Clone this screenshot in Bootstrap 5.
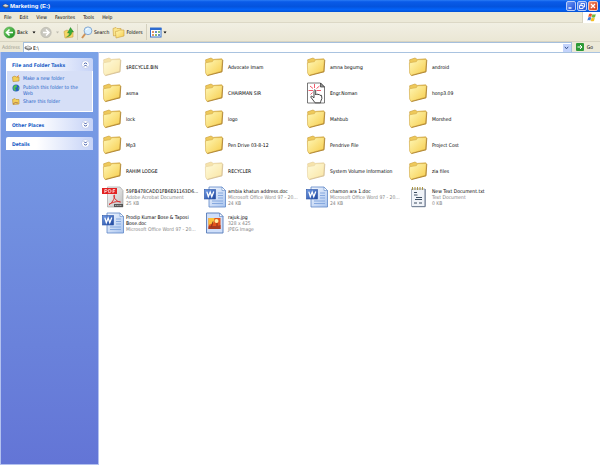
<!DOCTYPE html>
<html lang="en">
<head>
<meta charset="utf-8">
<meta name="viewport" content="width=device-width, initial-scale=1">
<title>Marketing (E:)</title>
<link href="https://cdn.jsdelivr.net/npm/bootstrap@5.3.0/dist/css/bootstrap.min.css" rel="stylesheet">
<style>
body { font-family: "DejaVu Sans Condensed", "Noto Sans", sans-serif; font-size: 5px; line-height: 6px; color: #000; background: #fff; }
button, input { font: inherit; color: inherit; }
svg { display: block; flex: none; }
.plain { border: 0; background: none; padding: 0; gap: 1px; display: flex; align-items: center; color: inherit; }
.titlebar { height: 12px; background: linear-gradient(#2a7cf5 0, #0a5be8 15%, #0453dd 55%, #0463f8 80%, #0350d2 100%); color: #fff; padding: 0 2px; gap: 1px; }
.titlebar h1 { font: bold 6px/12px "Liberation Sans", sans-serif; }
.winbtn { width: 10px; height: 10px; border: 1px solid #b9cdf8; border-radius: 2px; background: linear-gradient(135deg, #6d97f5, #1d4fd8); padding: 0; }
.winbtn.shut { background: linear-gradient(135deg, #f08a6a, #d63a12); border-color: #f4c9bd; }
.menus { height: 11px; background: #ece9d8; border-bottom: 1px solid #dcd8c6; padding-left: 4px; }
.menus nav { gap: 8px; }
.menus a { color: #000; text-decoration: none; }
.flagcell { width: 18px; height: 11px; background: #fff; border-left: 1px solid #d6d2c0; }
.tools { height: 19px; background: linear-gradient(#f1efe3, #ebe7d5); border-bottom: 1px solid #d8d4c2; padding-left: 3px; gap: 3px; }
.vsep { width: 1px; height: 16px; background: #d4d0be; }
.address { height: 10px; background: #ece9d8; padding-left: 2px; gap: 2px; }
.address label { color: #9a978a; width: 19px; }
.addrbox { height: 10px; background: #fff; border: 1px solid #a5bfdc; border-width: 1px 1px 0; }
.addrbox input { border: 0; outline: 0; padding: 0; height: 8px; min-width: 0; background: none; }
.addrbtn { width: 8px; height: 8px; background: #c3d3fb; justify-content: center; }
.gobtn { gap: 3px; padding: 0 7px 0 2px; }
.side { width: 99px; padding: 6px 5px; gap: 6px; background: linear-gradient(#7ba2e7, #6375d6); border: 1px solid #b3c1ef; border-top: 0; }
.panelhead { width: 100%; height: 13px; padding: 0 3px 0 6px; border-radius: 2px 2px 0 0; background: linear-gradient(90deg, #fff 35%, #c6d3f7); color: #215dc6; font-weight: bold; }
.panelbody { background: #d6dff7; border: 1px solid #fff; border-top: 0; padding: 4px 5px 6px; gap: 2px; }
.panelbody a { color: #215dc6; text-decoration: none; gap: 3px; }
.files { display: grid; grid-template-columns: repeat(auto-fill, 102px); grid-auto-rows: 26px; align-content: start; padding: 1px 0 0 3px; border-top: 1px solid #a9c3e0; }
.item { gap: 2px; }
.item a { color: #000; text-decoration: none; }
.item > div { width: 77px; }
.meta { color: #858585; white-space: nowrap; }
.faint { opacity: .5; }
</style>
<script src="https://cdn.jsdelivr.net/npm/bootstrap@5.3.0/dist/js/bootstrap.bundle.min.js"></script>
</head>
<body class="d-flex flex-column min-vh-100">
<svg width="0" height="0" class="position-absolute" aria-hidden="true">
<defs>
<linearGradient id="gf" x1="0" y1="0" x2="1" y2="1"><stop offset="0" stop-color="#fff8b8"/><stop offset="1" stop-color="#f6cc4a"/></linearGradient>
<linearGradient id="gd" x1="0" y1="0" x2="1" y2="1"><stop offset="0" stop-color="#f4f8ff"/><stop offset="1" stop-color="#a9c4ee"/></linearGradient>
<linearGradient id="gw" x1="0" y1="0" x2="1" y2="1"><stop offset="0" stop-color="#6f9be6"/><stop offset="1" stop-color="#1e459c"/></linearGradient>
<linearGradient id="gg" x1="0" y1="0" x2="1" y2="1"><stop offset="0" stop-color="#7fd470"/><stop offset="1" stop-color="#138a1c"/></linearGradient>
<linearGradient id="gp" x1="0" y1="0" x2="1" y2="1"><stop offset="0" stop-color="#fafafa"/><stop offset="1" stop-color="#bdbdbd"/></linearGradient>
<symbol id="folder" viewBox="0 0 22 22"><path d="M1.600 3.800 7 2l2.300 1.400L17.800 2.800v13L3 19z" fill="#eec95a" stroke="#c79a35" stroke-width=".6"/><path d="m1.400 6.800 7-1.200 1.200-1.900 8.800-.2-.8 11.700L3 19.400 1.600 17z" fill="url(#gf)" stroke="#d2a843" stroke-width=".6"/><path d="M3.500 19.600 18 15.800 18.800 4" fill="none" stroke="#a87c28" stroke-width=".8"/></symbol>
<symbol id="word" viewBox="0 0 22 22"><path d="M5 1h13l3.500 3.500V21H5z" fill="url(#gd)" stroke="#5d86c7" stroke-width=".8"/><path d="M18 1v3.500h3.500z" fill="#fff" stroke="#5d86c7" stroke-width=".6"/><path d="M14 7h5M14 9.500h5M14 12h5M8 15h11M8 17.500h11" stroke="#86a9df" stroke-width="1"/><rect x=".4" y="3.500" width="11.200" height="9.500" fill="url(#gw)" stroke="#3159a8" stroke-width=".6"/><path d="m2.800 5.600 1.500 5L6.200 6l1.600 4.600 2-5" fill="none" stroke="#fff" stroke-width="1.300"/></symbol>
<symbol id="pdf" viewBox="0 0 22 22"><path d="M5.500 1H18l3 3.500V21H5.500z" fill="url(#gp)" stroke="#999" stroke-width=".6"/><rect x="0" y="2" width="15" height="6" fill="#e22222"/><path d="M2.800 7V3.500h1.400q1 .1 1 1T4.200 5.500H2.800M6.700 3.500V6.600h1q1.400-.2 1.400-1.600T7.700 3.500zM11 7V3.500h2.200M11 5.200h1.800" fill="none" stroke="#fff" stroke-width=".7"/><path d="M7 18.500c4-2 6.500-8 5.300-9.500-1.800.5 1 6.500 6.200 7-3-1.200-8 .2-11.500 2.500z" fill="none" stroke="#db3030" stroke-width="1"/><path d="M12 18h9v3h-9z" fill="#555"/><path d="M13 19.500h7" stroke="#ccc" stroke-width=".7" stroke-dasharray="1.200 .5"/></symbol>
<symbol id="note" viewBox="0 0 22 22"><path d="M3.500 3H17v17.500H3.500z" fill="#f0f3f8" stroke="#8794a8" stroke-width=".7"/><path d="M17.200 3v17.700H4" fill="none" stroke="#6d7a90" stroke-width="1"/><path d="M4.500 1v3M7 1v3M9.500 1v3M12 1v3M14.500 1v3" stroke="#a99343" stroke-width="1"/><path d="M6 6.500h3M6 9h3.500M8 11.500h6M7 13.500h7M6 17h3M11 17h3" stroke="#3d4d61" stroke-width="1"/></symbol>
<symbol id="jpg" viewBox="0 0 22 22"><path d="M2.500 1h13L19 4.500V21H2.500z" fill="#cfdffa" stroke="#5479b8" stroke-width=".9"/><path d="M15.500 1v3.500H19z" fill="#fff" stroke="#5479b8" stroke-width=".6"/><rect x="4.500" y="6" width="12" height="11" fill="#e3541b"/><path d="M4.500 6h6l-1 5-5 2z" fill="#fbc33c"/><circle cx="12.500" cy="9" r="2" fill="#fff0a5"/><path d="M4.500 14.500c4-2 7 1 12-1.500v4h-12z" fill="#a83a20"/><path d="M7.500 14.500 9 9.500M13 14v-3" stroke="#7d2d19" stroke-width=".9"/></symbol>
<symbol id="hand" viewBox="0 0 22 22"><path d="M1.500 1H14.500l4 4v16h-17z" fill="#fff" stroke="#555" stroke-width=".8"/><path d="M14.500 1v4h4z" fill="#999" stroke="#333" stroke-width=".7"/><path d="M8.500 2v4M4 4l3 2.500M2.500 8.500H7M4.500 12.500l2-2M13.500 4l-3 2.500M15 8.500h-4.500" stroke="#f1465b" stroke-width=".9"/><path d="M8 15V8.500q.8-1.500 1.700 0V13l1.200-1.200 1 .9 1.200-.4.800 1 1.600.1q1.200 3-.8 6l-.2 1.400H9.100L4.700 15q.3-2 3.300.8z" fill="#fff" stroke="#333" stroke-width=".9"/></symbol>
<symbol id="drive" viewBox="0 0 8 6"><path d="m1 2 3-1 3.500 1.500V4L4.500 5 1 3.500z" fill="#9a9a9a" stroke="#444" stroke-width=".6"/><path d="m1 2 3-1 3.500 1.500-3 1z" fill="#ddd"/></symbol>
<symbol id="caret" viewBox="0 0 4 3"><path d="M.5.500h3L2 2.500z" fill="currentColor"/></symbol>
<symbol id="up2" viewBox="0 0 9 9"><circle cx="4.500" cy="4.500" r="3.900" fill="#fff" stroke="#a9b9e2" stroke-width=".6"/><path d="m3 4.200 1.500-1.500L6 4.200M3 6.500 4.500 5 6 6.500" fill="none" stroke="#1f3f9c" stroke-width=".9"/></symbol>
</defs>
</svg>

<header>
<div class="titlebar d-flex align-items-center">
  <svg width="7" height="6"><use href="#drive"/></svg>
  <h1 class="m-0 flex-grow-1 text-white">Marketing (E:)</h1>
  <button class="winbtn" type="button" aria-label="Minimize"><svg width="8" height="8"><path d="M1.500 6h3" stroke="#fff" stroke-width="1.400"/></svg></button>
  <button class="winbtn" type="button" aria-label="Restore"><svg width="8" height="8"><path d="M3 3V1.500h3.500V5H5M1.500 3.500H5v3H1.500z" fill="none" stroke="#fff" stroke-width=".9"/></svg></button>
  <button class="winbtn shut" type="button" aria-label="Close"><svg width="8" height="8"><path d="m2 2 4 4M6 2 2 6" stroke="#fff" stroke-width="1.200"/></svg></button>
</div>
<div class="menus d-flex align-items-center">
  <nav class="d-flex flex-grow-1" aria-label="Menu"><a href="#">File</a><a href="#">Edit</a><a href="#">View</a><a href="#">Favorites</a><a href="#">Tools</a><a href="#">Help</a></nav>
  <div class="flagcell d-flex align-items-center justify-content-center"><svg width="10" height="9" viewBox="0 0 10 9"><path d="M2 1q1.500-.9 3 0L4.300 4q-1.500-.9-3 0z" fill="#e8542a"/><path d="M5.400 1.200q1.600.8 3.400 0L8 4.300q-1.600.8-3.300 0z" fill="#6fb83a"/><path d="M1.200 4.500q1.500-.9 3 0l-.8 3q-1.500-.9-3 0z" fill="#3f79d8"/><path d="M4.500 4.800q1.600.8 3.300 0L7 7.900q-1.600.8-3.300 0z" fill="#f5bf25"/></svg></div>
</div>
<div class="tools d-flex align-items-center">
  <button class="plain" type="button"><svg width="13" height="13"><circle cx="6.500" cy="6.500" r="5.500" fill="url(#gg)" stroke="#3c9a3a" stroke-width=".6"/><path d="M10 6.500H4M6.500 3.500l-3 3 3 3" fill="none" stroke="#fff" stroke-width="1.600"/></svg>Back</button>
  <button class="plain" type="button" aria-label="Back history"><svg width="6" height="3"><use href="#caret"/></svg></button>
  <button class="plain" type="button" aria-label="Forward"><svg width="12" height="13"><circle cx="6" cy="6.500" r="5.200" fill="#c9c8c0" stroke="#b5b3a8" stroke-width=".6"/><path d="M3 6.500h6M6 3.500l3 3-3 3" fill="none" stroke="#fff" stroke-width="1.500"/></svg></button>
  <button class="plain text-black-50" type="button" aria-label="Forward history"><svg width="5" height="3"><use href="#caret" opacity=".4"/></svg></button>
  <button class="plain" type="button" aria-label="Up"><svg width="11" height="13"><path d="M1 5.500 4 4l1.500 1H10v6L2 12z" fill="#f6d765" stroke="#caa043" stroke-width=".6"/><path d="M3.500 11q3-1 3-4h-2l3-5.500L10.500 6H8.800q0 4-5.300 5z" fill="#37ab36" stroke="#1d7c22" stroke-width=".4"/></svg></button>
  <span class="vsep"></span>
  <button class="plain" type="button"><svg width="12" height="13"><path d="M1 12 4.500 7.500" stroke="#cf9155" stroke-width="2"/><circle cx="7" cy="4.800" r="3.900" fill="#d5edff" stroke="#86a9d1" stroke-width="1"/><path d="M5 4q.8-1.500 2.500-1.400" fill="none" stroke="#fff"/></svg>Search</button>
  <button class="plain" type="button"><svg width="13" height="13"><path d="M1 2.500 4 1.500l1 1h4v6L1.500 10z" fill="#fae48b" stroke="#cba03c" stroke-width=".6"/><path d="M3.500 5.500 6.500 5l1-1H12v6L4 12z" fill="url(#gf)" stroke="#cba03c" stroke-width=".6"/></svg>Folders</button>
  <span class="vsep"></span>
  <button class="plain" type="button" aria-label="Views"><svg width="12" height="11"><rect x=".5" y="1" width="10.500" height="9" fill="#fff" stroke="#3572cf"/><path d="M0 2h11.500" stroke="#2e6bcf" stroke-width="2"/><path d="M2 5h2M2 8h2" stroke="#d87332" stroke-width="1.500"/><path d="M5 5h2M8 8h2" stroke="#3469b5" stroke-width="1.500"/><path d="M8 5h2M5 8h2" stroke="#5eaa4b" stroke-width="1.500"/></svg><svg width="4" height="3"><use href="#caret"/></svg></button>
</div>
<div class="address d-flex align-items-center">
  <label for="addr">Address</label>
  <div class="addrbox d-flex align-items-center flex-grow-1"><svg width="9" height="6" viewBox="0 0 9 6"><use href="#drive" width="8" height="6"/></svg><input id="addr" class="flex-grow-1" type="text" value="E:\"><button class="plain addrbtn" type="button" aria-label="Address history"><svg width="5" height="4"><path d="m.8.800 1.700 2L4.200.8" fill="none" stroke="#35518c" stroke-width="1"/></svg></button></div>
  <button class="plain gobtn" type="button"><svg width="8" height="8"><rect width="8" height="8" rx="1" fill="#2c9a36"/><path d="M1.500 4h4M4 2l2 2-2 2" fill="none" stroke="#fff"/></svg>Go</button>
</div>
</header>

<div class="d-flex flex-grow-1">
<aside class="side d-flex flex-column flex-shrink-0">
  <section>
    <button class="plain panelhead justify-content-between" type="button" data-bs-toggle="collapse" data-bs-target="#tasks" aria-expanded="true">File and Folder Tasks<svg width="9" height="9"><use href="#up2"/></svg></button>
    <div id="tasks" class="collapse show"><div class="panelbody d-flex flex-column">
      <a class="d-flex" href="#"><svg width="8" height="7"><path d="M.5 2 3 1l1 1h3v4L1 6.600z" fill="#f3cf59" stroke="#b98e2d" stroke-width=".6"/><path d="m5 2 2-1.500" stroke="#ef8530"/></svg>Make a new folder</a>
      <a class="d-flex" href="#"><svg width="8" height="8"><circle cx="4" cy="4" r="3.500" fill="#2861bd"/><path d="M2 1.500 4.500 1 5 3 3 4l1 2-1 1Q0 5 2 1.500zM6 3l1.200 1L6 6z" fill="#4fc24e"/></svg><span>Publish this folder to the Web</span></a>
      <a class="d-flex" href="#"><svg width="8" height="7"><path d="M.5 1.500 3 .5l1 1h3v4.500L1 6.600z" fill="#f3cf59" stroke="#b98e2d" stroke-width=".6"/><path d="M1 6q2-2.500 5-1" fill="none" stroke="#b07b52"/></svg>Share this folder</a>
    </div></div>
  </section>
  <button class="plain panelhead justify-content-between" type="button">Other Places<svg width="9" height="9"><use href="#up2" transform="rotate(180 4.500 4.500)"/></svg></button>
  <button class="plain panelhead justify-content-between" type="button">Details<svg width="9" height="9"><use href="#up2" transform="rotate(180 4.500 4.500)"/></svg></button>
</aside>
<main class="files flex-grow-1">
  <div class="item d-flex align-items-center"><svg class="faint" width="22" height="22"><use href="#folder"/></svg><div><a href="#">$RECYCLE.BIN</a></div></div>
  <div class="item d-flex align-items-center"><svg width="22" height="22"><use href="#folder"/></svg><div><a href="#">Advocate Imam</a></div></div>
  <div class="item d-flex align-items-center"><svg width="22" height="22"><use href="#folder"/></svg><div><a href="#">amna begumg</a></div></div>
  <div class="item d-flex align-items-center"><svg width="22" height="22"><use href="#folder"/></svg><div><a href="#">android</a></div></div>
  <div class="item d-flex align-items-center"><svg width="22" height="22"><use href="#folder"/></svg><div><a href="#">asma</a></div></div>
  <div class="item d-flex align-items-center"><svg width="22" height="22"><use href="#folder"/></svg><div><a href="#">CHAIRMAN SIR</a></div></div>
  <div class="item d-flex align-items-center"><svg width="22" height="22"><use href="#hand"/></svg><div><a href="#">Engr.Noman</a></div></div>
  <div class="item d-flex align-items-center"><svg width="22" height="22"><use href="#folder"/></svg><div><a href="#">honp3.09</a></div></div>
  <div class="item d-flex align-items-center"><svg width="22" height="22"><use href="#folder"/></svg><div><a href="#">lock</a></div></div>
  <div class="item d-flex align-items-center"><svg width="22" height="22"><use href="#folder"/></svg><div><a href="#">logo</a></div></div>
  <div class="item d-flex align-items-center"><svg width="22" height="22"><use href="#folder"/></svg><div><a href="#">Mahbub</a></div></div>
  <div class="item d-flex align-items-center"><svg width="22" height="22"><use href="#folder"/></svg><div><a href="#">Morshed</a></div></div>
  <div class="item d-flex align-items-center"><svg width="22" height="22"><use href="#folder"/></svg><div><a href="#">Mp3</a></div></div>
  <div class="item d-flex align-items-center"><svg width="22" height="22"><use href="#folder"/></svg><div><a href="#">Pen Drive 03-8-12</a></div></div>
  <div class="item d-flex align-items-center"><svg width="22" height="22"><use href="#folder"/></svg><div><a href="#">Pendrive File</a></div></div>
  <div class="item d-flex align-items-center"><svg width="22" height="22"><use href="#folder"/></svg><div><a href="#">Project Cost</a></div></div>
  <div class="item d-flex align-items-center"><svg width="22" height="22"><use href="#folder"/></svg><div><a href="#">RAHIM LODGE</a></div></div>
  <div class="item d-flex align-items-center"><svg class="faint" width="22" height="22"><use href="#folder"/></svg><div><a href="#">RECYCLER</a></div></div>
  <div class="item d-flex align-items-center"><svg class="faint" width="22" height="22"><use href="#folder"/></svg><div><a href="#">System Volume Information</a></div></div>
  <div class="item d-flex align-items-center"><svg width="22" height="22"><use href="#folder"/></svg><div><a href="#">zia files</a></div></div>
  <div class="item d-flex align-items-center"><svg width="22" height="22"><use href="#pdf"/></svg><div><a href="#">59FB478CADD1FB6E91163D6...</a><div class="meta">Adobe Acrobat Document</div><div class="meta">25 KB</div></div></div>
  <div class="item d-flex align-items-center"><svg width="22" height="22"><use href="#word"/></svg><div><a href="#">ambia khatun address.doc</a><div class="meta">Microsoft Office Word 97 - 20...</div><div class="meta">24 KB</div></div></div>
  <div class="item d-flex align-items-center"><svg width="22" height="22"><use href="#word"/></svg><div><a href="#">chamon ara 1.doc</a><div class="meta">Microsoft Office Word 97 - 20...</div><div class="meta">24 KB</div></div></div>
  <div class="item d-flex align-items-center"><svg width="22" height="22"><use href="#note"/></svg><div><a href="#">New Text Document.txt</a><div class="meta">Text Document</div><div class="meta">0 KB</div></div></div>
  <div class="item d-flex align-items-center"><svg width="22" height="22"><use href="#word"/></svg><div><a href="#">Prodip Kumar Bose &amp; Taposi Bose.doc</a><div class="meta">Microsoft Office Word 97 - 20...</div></div></div>
  <div class="item d-flex align-items-center"><svg width="22" height="22"><use href="#jpg"/></svg><div><a href="#">rajuk.jpg</a><div class="meta">328 x 425</div><div class="meta">JPEG Image</div></div></div>
</main>
</div>
</body>
</html>
